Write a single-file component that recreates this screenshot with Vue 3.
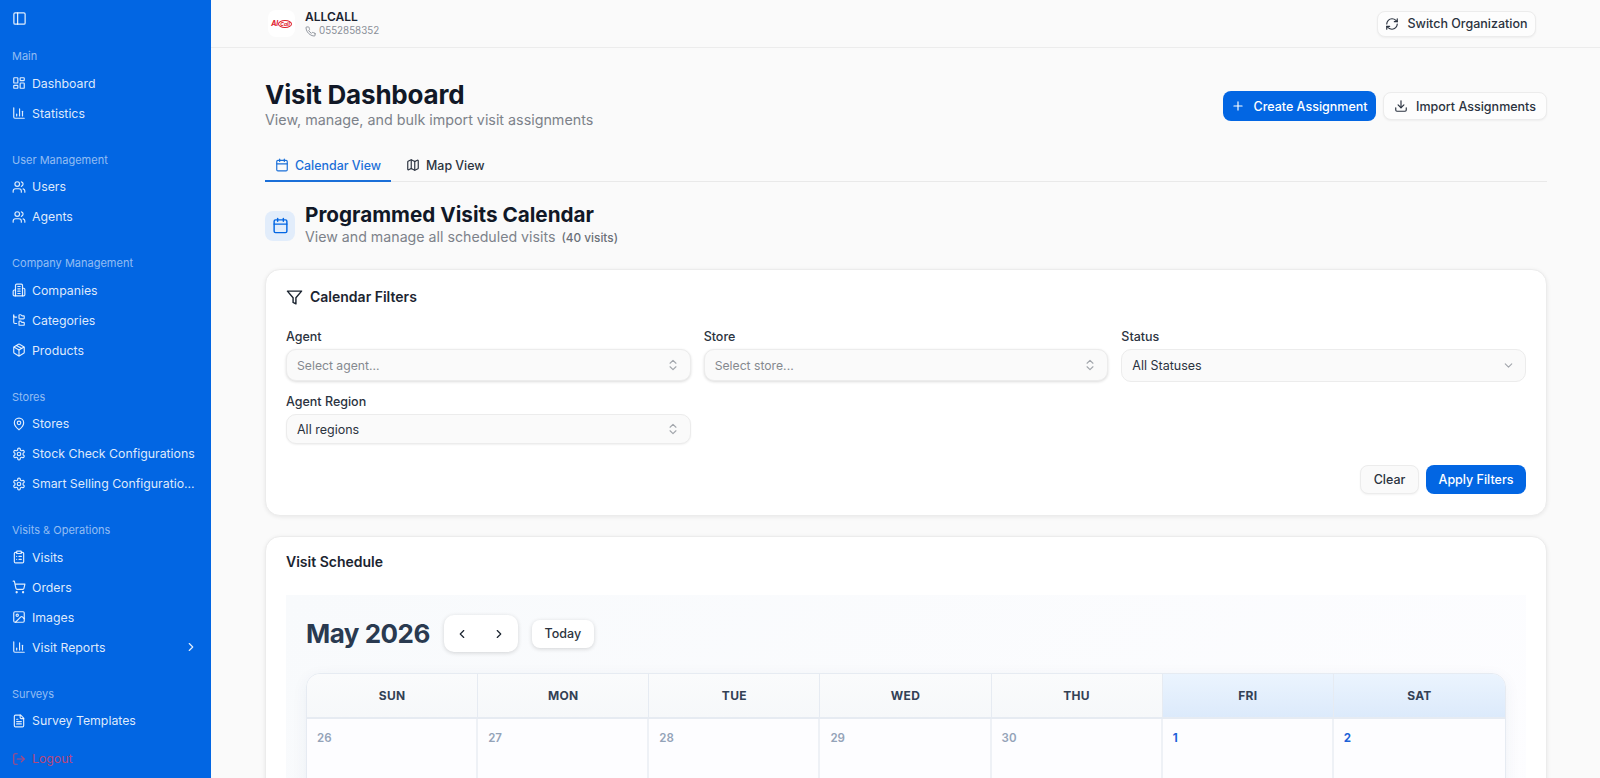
<template>
  <div class="shell">
    <aside class="sidebar">
      <div class="toggle"><Icon name="panel" :size="15" /></div>
      <div v-for="group in navGroups" :key="group.label" class="nav-group">
        <div class="nav-label">{{ group.label }}</div>
        <a v-for="item in group.items" :key="item.text" class="nav-item">
          <Icon :name="item.icon" :size="14" />
          <span class="nav-text">{{ item.text }}</span>
          <Icon v-if="item.more" name="chevronRight" :size="14" class="nav-more" />
        </a>
      </div>
      <a class="nav-item logout">
        <Icon name="logout" :size="14" />
        <span class="nav-text">Logout</span>
      </a>
    </aside>

    <main class="main">
      <header class="topbar">
        <div class="org">
          <div class="org-logo"><span class="logo-a">Al</span><span class="logo-c">Call</span></div>
          <div>
            <div class="org-name">ALLCALL</div>
            <div class="org-phone"><Icon name="phone" :size="11" /> 0552858352</div>
          </div>
        </div>
        <button class="btn btn-light switch"><Icon name="refresh" :size="14" /> Switch Organization</button>
      </header>

      <div class="content">
        <div class="page-head">
          <div>
            <h1>Visit Dashboard</h1>
            <p>View, manage, and bulk import visit assignments</p>
          </div>
          <div class="page-actions">
            <button class="btn btn-primary create"><Icon name="plus" :size="14" /> Create Assignment</button>
            <button class="btn btn-light import"><Icon name="download" :size="14" /> Import Assignments</button>
          </div>
        </div>

        <div class="tabs">
          <div class="tab active"><Icon name="calendar" :size="14" /> Calendar View</div>
          <div class="tab"><Icon name="map" :size="14" /> Map View</div>
        </div>

        <div class="section-head">
          <div class="section-icon"><Icon name="calendar" :size="17" /></div>
          <div>
            <h2>Programmed Visits Calendar</h2>
            <p>View and manage all scheduled visits <small>(40 visits)</small></p>
          </div>
        </div>

        <section class="card filters">
          <h3 class="filter-title"><Icon name="filter" :size="17" /> Calendar Filters</h3>
          <div class="filter-grid">
            <div class="field">
              <label>Agent</label>
              <div class="select placeholder raised">Select agent... <Icon name="updown" :size="14" /></div>
            </div>
            <div class="field">
              <label>Store</label>
              <div class="select placeholder raised">Select store... <Icon name="updown" :size="14" /></div>
            </div>
            <div class="field">
              <label>Status</label>
              <div class="select status">All Statuses <Icon name="chevronDown" :size="13" /></div>
            </div>
            <div class="field">
              <label>Agent Region</label>
              <div class="select region">All regions <Icon name="updown" :size="14" /></div>
            </div>
          </div>
          <div class="filter-actions">
            <button class="btn btn-muted">Clear</button>
            <button class="btn btn-primary apply">Apply Filters</button>
          </div>
        </section>

        <section class="card schedule">
          <h3>Visit Schedule</h3>
          <div class="calendar">
            <div class="cal-toolbar">
              <div class="cal-title">May 2026</div>
              <div class="cal-nav">
                <Icon name="chevronLeft" :size="14" />
                <Icon name="chevronRight" :size="14" />
              </div>
              <button class="btn today">Today</button>
            </div>
            <div class="cal-grid">
              <div v-for="(d, i) in weekDays" :key="d" class="cal-head" :class="{ current: i > 4 }">{{ d }}</div>
              <div v-for="day in days" :key="day.n" class="cal-cell" :class="{ current: day.current }">{{ day.n }}</div>
            </div>
          </div>
        </section>
      </div>
    </main>
  </div>
</template>

<script setup>
import { h } from 'vue'

const svgIcons = {
  panel: '<rect x="3" y="3" width="18" height="18" rx="2"/><path d="M9 3v18"/>',
  dashboard: '<rect x="3" y="3" width="7" height="9" rx="1"/><rect x="14" y="3" width="7" height="5" rx="1"/><rect x="14" y="12" width="7" height="9" rx="1"/><rect x="3" y="16" width="7" height="5" rx="1"/>',
  chart: '<path d="M3 3v16a2 2 0 0 0 2 2h16"/><path d="M18 17V9"/><path d="M13 17V5"/><path d="M8 17v-3"/>',
  users: '<path d="M16 21v-2a4 4 0 0 0-4-4H6a4 4 0 0 0-4 4v2"/><circle cx="9" cy="7" r="4"/><path d="M22 21v-2a4 4 0 0 0-3-3.87"/><path d="M16 3.13a4 4 0 0 1 0 7.75"/>',
  building: '<path d="M6 22V4a2 2 0 0 1 2-2h8a2 2 0 0 1 2 2v18Z"/><path d="M6 12H4a2 2 0 0 0-2 2v6a2 2 0 0 0 2 2h2"/><path d="M18 9h2a2 2 0 0 1 2 2v9a2 2 0 0 1-2 2h-2"/><path d="M10 6h4"/><path d="M10 10h4"/><path d="M10 14h4"/><path d="M10 18h4"/>',
  tree: '<path d="M20 10a1 1 0 0 0 1-1V6a1 1 0 0 0-1-1h-2.5a1 1 0 0 1-.8-.4l-.9-1.2A1 1 0 0 0 15 3h-2a1 1 0 0 0-1 1v5a1 1 0 0 0 1 1Z"/><path d="M20 21a1 1 0 0 0 1-1v-3a1 1 0 0 0-1-1h-2.9a1 1 0 0 1-.88-.55l-.42-.85a1 1 0 0 0-.92-.6H13a1 1 0 0 0-1 1v5a1 1 0 0 0 1 1Z"/><path d="M3 5a2 2 0 0 0 2 2h3"/><path d="M3 3v13a2 2 0 0 0 2 2h3"/>',
  box: '<path d="M11 21.73a2 2 0 0 0 2 0l7-4A2 2 0 0 0 21 16V8a2 2 0 0 0-1-1.73l-7-4a2 2 0 0 0-2 0l-7 4A2 2 0 0 0 3 8v8a2 2 0 0 0 1 1.73z"/><path d="M12 22V12"/><path d="M3.29 7 12 12l8.71-5"/><path d="m7.5 4.27 9 5.15"/>',
  pin: '<path d="M20 10c0 6-8 12-8 12s-8-6-8-12a8 8 0 0 1 16 0Z"/><circle cx="12" cy="10" r="3"/>',
  cog: '<path d="M12.22 2h-.44a2 2 0 0 0-2 2v.18a2 2 0 0 1-1 1.73l-.43.25a2 2 0 0 1-2 0l-.15-.08a2 2 0 0 0-2.73.73l-.22.38a2 2 0 0 0 .73 2.73l.15.1a2 2 0 0 1 1 1.72v.51a2 2 0 0 1-1 1.74l-.15.09a2 2 0 0 0-.73 2.73l.22.38a2 2 0 0 0 2.73.73l.15-.08a2 2 0 0 1 2 0l.43.25a2 2 0 0 1 1 1.73V20a2 2 0 0 0 2 2h.44a2 2 0 0 0 2-2v-.18a2 2 0 0 1 1-1.73l.43-.25a2 2 0 0 1 2 0l.15.08a2 2 0 0 0 2.73-.73l.22-.39a2 2 0 0 0-.73-2.73l-.15-.08a2 2 0 0 1-1-1.74v-.5a2 2 0 0 1 1-1.74l.15-.09a2 2 0 0 0 .73-2.73l-.22-.38a2 2 0 0 0-2.73-.73l-.15.08a2 2 0 0 1-2 0l-.43-.25a2 2 0 0 1-1-1.73V4a2 2 0 0 0-2-2z"/><circle cx="12" cy="12" r="3"/>',
  clipboard: '<rect x="8" y="2" width="8" height="4" rx="1"/><path d="M16 4h2a2 2 0 0 1 2 2v14a2 2 0 0 1-2 2H6a2 2 0 0 1-2-2V6a2 2 0 0 1 2-2h2"/><path d="M12 11h4"/><path d="M12 16h4"/><path d="M8 11h.01"/><path d="M8 16h.01"/>',
  cart: '<circle cx="8" cy="21" r="1"/><circle cx="19" cy="21" r="1"/><path d="M2.05 2.05h2l2.66 12.42a2 2 0 0 0 2 1.58h9.78a2 2 0 0 0 1.95-1.57l1.65-7.43H5.12"/>',
  image: '<rect x="3" y="3" width="18" height="18" rx="2"/><circle cx="9" cy="9" r="2"/><path d="m21 15-3.086-3.086a2 2 0 0 0-2.828 0L6 21"/>',
  file: '<path d="M15 2H6a2 2 0 0 0-2 2v16a2 2 0 0 0 2 2h12a2 2 0 0 0 2-2V7Z"/><path d="M14 2v4a2 2 0 0 0 2 2h4"/><path d="M10 9H8"/><path d="M16 13H8"/><path d="M16 17H8"/>',
  logout: '<path d="M9 21H5a2 2 0 0 1-2-2V5a2 2 0 0 1 2-2h4"/><path d="m16 17 5-5-5-5"/><path d="M21 12H9"/>',
  phone: '<path d="M22 16.92v3a2 2 0 0 1-2.18 2 19.79 19.79 0 0 1-8.63-3.07 19.5 19.5 0 0 1-6-6 19.79 19.79 0 0 1-3.07-8.67A2 2 0 0 1 4.11 2h3a2 2 0 0 1 2 1.72 12.84 12.84 0 0 0 .7 2.81 2 2 0 0 1-.45 2.11L8.09 9.91a16 16 0 0 0 6 6l1.27-1.27a2 2 0 0 1 2.11-.45 12.84 12.84 0 0 0 2.81.7A2 2 0 0 1 22 16.92z"/>',
  refresh: '<path d="M3 12a9 9 0 0 1 9-9 9.75 9.75 0 0 1 6.74 2.74L21 8"/><path d="M21 3v5h-5"/><path d="M21 12a9 9 0 0 1-9 9 9.75 9.75 0 0 1-6.74-2.74L3 16"/><path d="M8 16H3v5"/>',
  plus: '<path d="M5 12h14"/><path d="M12 5v14"/>',
  download: '<path d="M21 15v4a2 2 0 0 1-2 2H5a2 2 0 0 1-2-2v-4"/><path d="m7 10 5 5 5-5"/><path d="M12 15V3"/>',
  calendar: '<path d="M8 2v4"/><path d="M16 2v4"/><rect x="3" y="4" width="18" height="18" rx="2"/><path d="M3 10h18"/>',
  map: '<path d="M14.106 5.553a2 2 0 0 0 1.788 0l3.659-1.83A1 1 0 0 1 21 4.619v12.764a1 1 0 0 1-.553.894l-4.553 2.277a2 2 0 0 1-1.788 0l-4.212-2.106a2 2 0 0 0-1.788 0l-3.659 1.83A1 1 0 0 1 3 19.381V6.618a1 1 0 0 1 .553-.894l4.553-2.277a2 2 0 0 1 1.788 0z"/><path d="M15 5.764v15"/><path d="M9 3.236v15"/>',
  filter: '<path d="M22 3H2l8 9.46V19l4 2v-8.54L22 3z"/>',
  updown: '<path d="m7 15 5 5 5-5"/><path d="m7 9 5-5 5 5"/>',
  chevronDown: '<path d="m6 9 6 6 6-6"/>',
  chevronLeft: '<path d="m15 18-6-6 6-6"/>',
  chevronRight: '<path d="m9 18 6-6-6-6"/>'
}

// small functional wrapper so the template stays readable
const Icon = (props) =>
  h('svg', {
    class: 'icon',
    width: props.size,
    height: props.size,
    viewBox: '0 0 24 24',
    fill: 'none',
    stroke: 'currentColor',
    'stroke-width': 2,
    'stroke-linecap': 'round',
    'stroke-linejoin': 'round',
    innerHTML: svgIcons[props.name]
  })
Icon.props = ['name', 'size']

const navGroups = [
  { label: 'Main', items: [
    { text: 'Dashboard', icon: 'dashboard' },
    { text: 'Statistics', icon: 'chart' }
  ] },
  { label: 'User Management', items: [
    { text: 'Users', icon: 'users' },
    { text: 'Agents', icon: 'users' }
  ] },
  { label: 'Company Management', items: [
    { text: 'Companies', icon: 'building' },
    { text: 'Categories', icon: 'tree' },
    { text: 'Products', icon: 'box' }
  ] },
  { label: 'Stores', items: [
    { text: 'Stores', icon: 'pin' },
    { text: 'Stock Check Configurations', icon: 'cog' },
    { text: 'Smart Selling Configuratio...', icon: 'cog' }
  ] },
  { label: 'Visits & Operations', items: [
    { text: 'Visits', icon: 'clipboard' },
    { text: 'Orders', icon: 'cart' },
    { text: 'Images', icon: 'image' },
    { text: 'Visit Reports', icon: 'chart', more: true }
  ] },
  { label: 'Surveys', items: [
    { text: 'Survey Templates', icon: 'file' }
  ] }
]

const weekDays = ['SUN', 'MON', 'TUE', 'WED', 'THU', 'FRI', 'SAT']
const days = [
  { n: 26 }, { n: 27 }, { n: 28 }, { n: 29 }, { n: 30 },
  { n: 1, current: true }, { n: 2, current: true }
]
</script>

<style>
html, body {
  margin: 0;
  height: 100%;
  overflow: hidden;
}
</style>

<style scoped>
.shell {
  display: flex;
  height: 778px;
  overflow: hidden;
  font-family: Inter, "Noto Sans", sans-serif;
  color: #111827;
}
.icon {
  flex: none;
}
h1, h2, h3, p {
  margin: 0;
}

/* sidebar */
.sidebar {
  width: 211px;
  flex: none;
  background: #0266e3;
  color: rgba(255, 255, 255, 0.88);
  padding: 10px 12px 0 12px;
  box-sizing: border-box;
}
.toggle {
  height: 16px;
  margin-bottom: 18px;
  display: flex;
  align-items: center;
}
.nav-group {
  margin-bottom: 19.6px;
}
.nav-label {
  height: 24px;
  line-height: 24px;
  font-size: 11px;
  color: rgba(255, 255, 255, 0.58);
  white-space: nowrap;
}
.nav-item {
  display: flex;
  align-items: center;
  gap: 6px;
  height: 30px;
  font-size: 12.3px;
}
.nav-text {
  flex: 1;
  min-width: 0;
  white-space: nowrap;
  overflow: hidden;
}
.nav-more {
  margin-right: 1px;
}
.logout {
  margin-top: -12px;
  color: #b5487d;
}

/* top bar */
.main {
  flex: 1;
  min-width: 0;
  background: #fafafa;
  overflow: hidden;
}
.topbar {
  height: 48px;
  box-sizing: border-box;
  border-bottom: 1px solid #ececec;
  display: flex;
  align-items: center;
  justify-content: space-between;
  padding: 0 64px 0 57px;
}
.org {
  display: flex;
  align-items: center;
  gap: 10px;
}
.org-logo {
  width: 27px;
  height: 27px;
  background: #fff;
  border-radius: 8px;
  display: flex;
  align-items: center;
  justify-content: center;
  font-size: 7px;
  font-style: italic;
  font-weight: 700;
  color: #e0202c;
}
.logo-c {
  border: 1px solid #e0202c;
  border-radius: 50%;
  font-size: 5px;
  padding: 0 1px;
}
.org-name {
  font-size: 12px;
  font-weight: 600;
  line-height: 15px;
  color: #1b2430;
}
.org-phone {
  display: flex;
  align-items: center;
  gap: 3px;
  font-size: 9.8px;
  line-height: 14px;
  color: #8a8f98;
}

/* buttons */
.btn {
  display: inline-flex;
  align-items: center;
  justify-content: center;
  gap: 8px;
  border-radius: 8px;
  font-family: inherit;
  font-size: 12.5px;
  font-weight: 500;
  white-space: nowrap;
  cursor: pointer;
  box-sizing: border-box;
}
.btn-light {
  background: #fdfdfd;
  border: 1px solid #ececec;
  color: #2b3340;
  box-shadow: 0 1px 2px rgba(0, 0, 0, 0.05);
}
.btn-primary {
  background: #0266e3;
  border: none;
  color: #fff;
}
.btn-muted {
  width: 59px;
  height: 29px;
  background: #fafafa;
  border: 1px solid #ececec;
  color: #2b3340;
  box-shadow: 0 1px 2px rgba(0, 0, 0, 0.05);
}
.switch {
  width: 159px;
  height: 26px;
}
.create {
  width: 153px;
  height: 30px;
}
.import {
  width: 164px;
  height: 28px;
}
.apply {
  width: 100px;
  height: 29px;
}

/* page */
.content {
  padding: 32px 53px 0 54px;
}
.page-head {
  display: flex;
  justify-content: space-between;
  align-items: flex-start;
}
h1 {
  font-size: 26px;
  font-weight: 700;
  letter-spacing: -0.2px;
  line-height: 30px;
  color: #111827;
}
.page-head p {
  font-size: 14.3px;
  line-height: 20px;
  color: #7d828a;
}
.page-actions {
  display: flex;
  align-items: center;
  gap: 7px;
  margin-top: 11px;
}
.tabs {
  display: flex;
  gap: 5px;
  margin-top: 20px;
  border-bottom: 1px solid #e9e9e9;
}
.tab {
  display: flex;
  align-items: center;
  gap: 6px;
  height: 30px;
  padding: 0 10px;
  font-size: 12.4px;
  font-weight: 500;
  color: #2b3340;
  margin-bottom: -1px;
}
.tab.active {
  color: #1a6fd8;
  border-bottom: 2px solid #1a6fd8;
}
.section-head {
  display: flex;
  align-items: center;
  gap: 10px;
  margin-top: 21px;
}
.section-icon {
  width: 30px;
  height: 30px;
  border-radius: 8px;
  background: #e2edfb;
  color: #0266e3;
  display: flex;
  align-items: center;
  justify-content: center;
}
h2 {
  font-size: 20.7px;
  font-weight: 700;
  line-height: 24px;
  color: #111827;
}
.section-head p {
  font-size: 14.2px;
  line-height: 20px;
  color: #7d828a;
}
.section-head small {
  font-size: 11.8px;
  font-weight: 500;
  margin-left: 2px;
  color: #6b7078;
}

/* cards */
.card {
  background: #fff;
  border: 1px solid #ececec;
  border-radius: 15px;
  box-shadow: 0 1px 4px rgba(0, 0, 0, 0.08);
  margin-top: 21px;
  padding: 15px 20px 20px;
}
.filters {
  padding-bottom: 21px;
}
.filter-title {
  display: flex;
  align-items: center;
  gap: 7px;
  font-size: 14px;
  font-weight: 600;
  line-height: 24px;
  color: #1b2430;
}
.filter-grid {
  display: grid;
  grid-template-columns: repeat(3, 1fr);
  column-gap: 13px;
  row-gap: 11px;
  margin-top: 19px;
}
.field label {
  display: block;
  font-size: 12.5px;
  font-weight: 500;
  line-height: 18px;
  margin-bottom: 3px;
  color: #2b3340;
}
.select {
  height: 30px;
  box-sizing: border-box;
  display: flex;
  align-items: center;
  justify-content: space-between;
  padding: 0 10px 0 10px;
  background: #fafafa;
  border: 1px solid #ececec;
  border-radius: 10px;
  font-size: 12.5px;
  color: #2b3340;
  box-shadow: 0 1px 2px rgba(0, 0, 0, 0.06);
}
.select .icon {
  color: #a2a6ac;
}
.select.raised {
  height: 32px;
  box-shadow: 0 1px 3px rgba(0, 0, 0, 0.14);
}
.select.placeholder {
  font-size: 12.2px;
  color: #85898f;
}
.select.status {
  height: 33px;
  box-shadow: none;
}
.filter-actions {
  display: flex;
  justify-content: flex-end;
  gap: 7px;
  margin-top: 21px;
}
.schedule {
  margin-top: 20px;
  padding: 13px 20px 0;
}
.schedule h3 {
  font-size: 14px;
  font-weight: 600;
  line-height: 24px;
  color: #1b2430;
}
.calendar {
  margin-top: 21px;
  padding: 20px;
  background: linear-gradient(135deg, #f8fafc, #fdfdff);
}
.cal-toolbar {
  display: flex;
  align-items: center;
}
.cal-title {
  font-size: 26px;
  font-weight: 700;
  letter-spacing: -0.5px;
  color: #2a3a50;
}
.cal-nav {
  width: 74px;
  height: 37px;
  margin-left: 14px;
  display: flex;
  align-items: center;
  justify-content: space-around;
  background: #fff;
  border-radius: 10px;
  box-shadow: 0 1px 4px rgba(0, 0, 0, 0.16);
  color: #1b2430;
}
.today {
  width: 62px;
  height: 28px;
  margin-left: 14px;
  background: #fff;
  border: none;
  color: #2b3340;
  box-shadow: 0 1px 4px rgba(0, 0, 0, 0.16);
}
.cal-grid {
  display: grid;
  grid-template-columns: repeat(7, 1fr);
  margin-top: 21px;
  border: 1px solid #e6ebf2;
  border-radius: 14px;
  overflow: hidden;
  box-shadow: 0 4px 16px rgba(30, 60, 120, 0.06);
}
.cal-head {
  height: 43px;
  display: flex;
  align-items: center;
  justify-content: center;
  font-size: 12px;
  font-weight: 700;
  letter-spacing: 0.3px;
  color: #334155;
  background: linear-gradient(180deg, #fafbfc, #f6f8fa);
  border-right: 1px solid #e6ebf2;
  border-bottom: 2px solid #e6ebf2;
}
.cal-head.current {
  background: linear-gradient(180deg, #ebf4fe, #dceafb);
}
.cal-cell {
  height: 120px;
  padding: 12px 10px;
  box-sizing: border-box;
  font-size: 11.5px;
  font-weight: 600;
  color: #94a3b8;
  background: #fdfdff;
  border-right: 2px solid #eef1f6;
}
.cal-cell.current {
  color: #1d63d8;
  font-weight: 700;
}
.cal-head:nth-child(7), .cal-cell:nth-child(14) {
  border-right: none;
}
</style>
